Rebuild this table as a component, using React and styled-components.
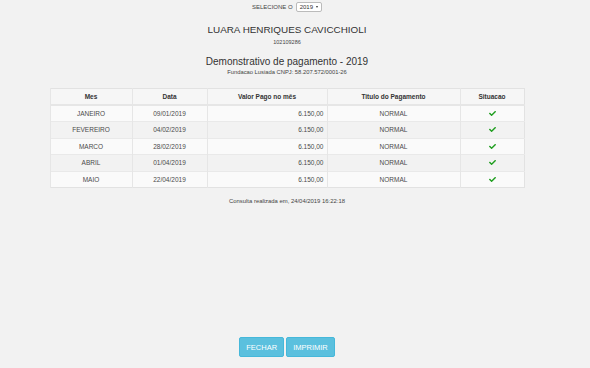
import React from "react";
import styled, { createGlobalStyle } from "styled-components";
import { FaCheck } from "react-icons/fa";

const GlobalStyle = createGlobalStyle`
  html, body {
    margin: 0;
    padding: 0;
    background: #f2f2f2;
    font-family: "Liberation Sans", Arial, sans-serif;
    color: #333;
  }
`;

const rows = [
  { mes: "JANEIRO", data: "09/01/2019" },
  { mes: "FEVEREIRO", data: "04/02/2019" },
  { mes: "MARCO", data: "28/02/2019" },
  { mes: "ABRIL", data: "01/04/2019" },
  { mes: "MAIO", data: "22/04/2019" },
];

const Page = styled.div`
  height: 368px;
  padding-right: 16px;
  display: flex;
  flex-direction: column;
  align-items: center;
`;

const YearBar = styled.div`
  display: flex;
  align-items: center;
  gap: 3px;
  margin-top: 2px;
  font-size: 6px;
  color: #444;
`;

const YearSelect = styled.div`
  display: flex;
  align-items: center;
  gap: 3px;
  height: 8px;
  padding: 0 3px;
  background: #fff;
  border: 1px solid #bbb;
  border-radius: 2px;
  font-size: 6px;
  color: #333;

  &::after {
    content: "";
    border-left: 1.5px solid transparent;
    border-right: 1.5px solid transparent;
    border-top: 2px solid #333;
  }
`;

const Name = styled.h1`
  margin: 11px 0 0;
  font-size: 9.9px;
  line-height: 14px;
  font-weight: normal;
  color: #333;
`;

const Small = styled.div`
  margin-top: ${(p) => p.$top || 0}px;
  font-size: ${(p) => p.$size || 5.8}px;
  line-height: 7px;
  color: #444;
`;

const Title = styled.h2`
  margin: 10px 0 0;
  font-size: 10px;
  line-height: 12px;
  font-weight: normal;
  color: #333;
`;

const Table = styled.table`
  margin-top: 12px;
  width: 474px;
  table-layout: fixed;
  border-collapse: collapse;
  background: #fbfbfb;
  border: 1px solid #e2e2e2;
  font-size: 6.5px;
  color: #4a4a4a;
`;

const Th = styled.th`
  height: 14.5px;
  padding: 0 4px;
  font-weight: bold;
  color: #333;
  text-align: center;
  background: #f6f6f6;
  border-left: 1px solid #e6e6e6;
  border-bottom: 2px solid #e6e6e6;
`;

const Tr = styled.tr`
  background: ${(p) => (p.$odd ? "#f2f2f2" : "#fafafa")};
`;

const Td = styled.td`
  height: 15.5px;
  padding: 0 3px;
  text-align: ${(p) => p.$align || "center"};
  border-left: 1px solid #e6e6e6;
  border-top: 1px solid #e9e9e9;
`;

const CheckCell = styled(Td)`
  color: #1f9e1f;
  font-size: 7px;
  line-height: 0;
`;

const Consulta = styled.div`
  margin-top: 10px;
  font-size: 5.9px;
  color: #444;
`;

const Footer = styled.div`
  margin-top: auto;
  margin-bottom: 11px;
  display: flex;
  gap: 2px;
`;

const Button = styled.button`
  height: 20px;
  padding: 0 6px;
  border: 1px solid #46b8da;
  border-radius: 2px;
  background: #5bc0de;
  color: #fff;
  font-family: "Liberation Sans", Arial, sans-serif;
  font-size: 7.5px;
`;

export default function App() {
  return (
    <Page>
      <GlobalStyle />
      <YearBar>
        SELECIONE O
        <YearSelect>2019</YearSelect>
      </YearBar>
      <Name>LUARA HENRIQUES CAVICCHIOLI</Name>
      <Small $top={2} $size={5.5}>102109286</Small>
      <Title>Demonstrativo de pagamento - 2019</Title>
      <Small $top={1}>Fundacao Lusiada CNPJ: 58.207.572/0001-26</Small>
      <Table>
        <colgroup>
          <col style={{ width: 82 }} />
          <col style={{ width: 75 }} />
          <col style={{ width: 120 }} />
          <col style={{ width: 133 }} />
          <col style={{ width: 64 }} />
        </colgroup>
        <thead>
          <tr>
            <Th>Mes</Th>
            <Th>Data</Th>
            <Th>Valor Pago no mês</Th>
            <Th>Titulo do Pagamento</Th>
            <Th>Situacao</Th>
          </tr>
        </thead>
        <tbody>
          {rows.map((r, i) => (
            <Tr key={r.mes} $odd={i % 2 === 1}>
              <Td>{r.mes}</Td>
              <Td>{r.data}</Td>
              <Td $align="right">6.150,00</Td>
              <Td>NORMAL</Td>
              <CheckCell>
                <FaCheck />
              </CheckCell>
            </Tr>
          ))}
        </tbody>
      </Table>
      <Consulta>Consulta realizada em, 24/04/2019 16:22:18</Consulta>
      <Footer>
        <Button>FECHAR</Button>
        <Button>IMPRIMIR</Button>
      </Footer>
    </Page>
  );
}
